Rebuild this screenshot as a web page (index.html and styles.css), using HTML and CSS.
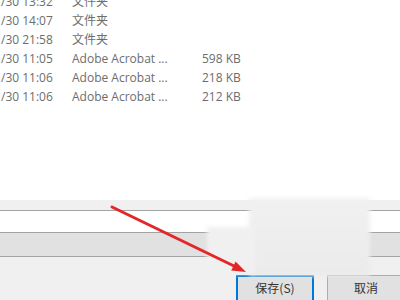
FILE: index.html
```html
<!DOCTYPE html>
<html>
<head>
<meta charset="utf-8">
<link rel="stylesheet" href="styles.css">
</head>
<body>
<div class="page">
  <div class="list">
    <div class="row"><span class="date">/30 13:32</span><span class="type">文件夹</span><span class="size"></span></div>
    <div class="row"><span class="date">/30 14:07</span><span class="type">文件夹</span><span class="size"></span></div>
    <div class="row"><span class="date">/30 21:58</span><span class="type">文件夹</span><span class="size"></span></div>
    <div class="row"><span class="date">/30 11:05</span><span class="type">Adobe Acrobat ...</span><span class="size">598 KB</span></div>
    <div class="row"><span class="date">/30 11:06</span><span class="type">Adobe Acrobat ...</span><span class="size">218 KB</span></div>
    <div class="row"><span class="date">/30 11:06</span><span class="type">Adobe Acrobat ...</span><span class="size">212 KB</span></div>
  </div>
  <div class="footer">
    <div class="field"></div>
    <div class="combo"></div>
    <div class="buttons">
      <button class="btn primary">保存(S)</button>
      <button class="btn">取消</button>
    </div>
  </div>
  <div class="blur blur-a"></div>
  <div class="blur blur-b"></div>
  <svg class="arrow" width="400" height="300" viewBox="0 0 400 300">
    <line x1="112" y1="207" x2="234" y2="266" stroke="#e3262a" stroke-width="3" stroke-linecap="round"/>
    <polygon points="246,272 231.2,270.4 235.6,261.4" fill="#e3262a"/>
  </svg>
</div>
</body>
</html>
```
FILE: styles.css
```css
html, body {
  margin: 0;
  padding: 0;
}
body {
  width: 400px;
  height: 300px;
  overflow: hidden;
  background: #ffffff;
  font-family: "Open Sans", "Noto Sans CJK SC", sans-serif;
  font-size: 12px;
  color: #6d6d6d;
}
.page {
  position: relative;
  width: 400px;
  height: 300px;
  overflow: hidden;
}
.list {
  height: 200px;
  background: #ffffff;
  overflow: hidden;
}
.row {
  display: flex;
  height: 19px;
  line-height: 19px;
  white-space: nowrap;
}
.row:first-child {
  margin-top: -8px;
}
.date {
  width: 72px;
  padding-left: 1px;
  box-sizing: border-box;
}
.type {
  width: 130px;
}
.size {
  width: 38px;
  text-align: right;
}
.footer {
  height: 100px;
  background: #f0f0f0;
  padding-top: 10px;
  box-sizing: border-box;
}
.field {
  height: 21px;
  background: #ffffff;
  border-top: 1px solid #a3a3a3;
  border-bottom: 1px solid #a3a3a3;
}
.combo {
  height: 23px;
  background: #e1e1e1;
  border-bottom: 1px solid #a3a3a3;
}
.buttons {
  display: flex;
  gap: 13px;
  padding-left: 236px;
  margin-top: 18px;
}
.btn {
  height: 28px;
  width: 78px;
  background: #e1e1e1;
  border: 1px solid #adadad;
  font-family: "Noto Sans CJK SC", sans-serif;
  font-size: 12px;
  color: #333333;
  padding: 0;
  padding-bottom: 4px;
  flex: none;
}
.btn.primary {
  border: 2px solid #0078d7;
}
.blur {
  position: absolute;
  background: #efefef;
  filter: blur(2px);
}
.blur-a {
  left: 249px;
  top: 198px;
  width: 121px;
  height: 78px;
  background: linear-gradient(#f1f1f1, #ebebeb);
}
.blur-b {
  left: 207px;
  top: 227px;
  width: 48px;
  height: 47px;
  background: #f0f0f0;
}
.arrow {
  position: absolute;
  left: 0;
  top: 0;
}
```
